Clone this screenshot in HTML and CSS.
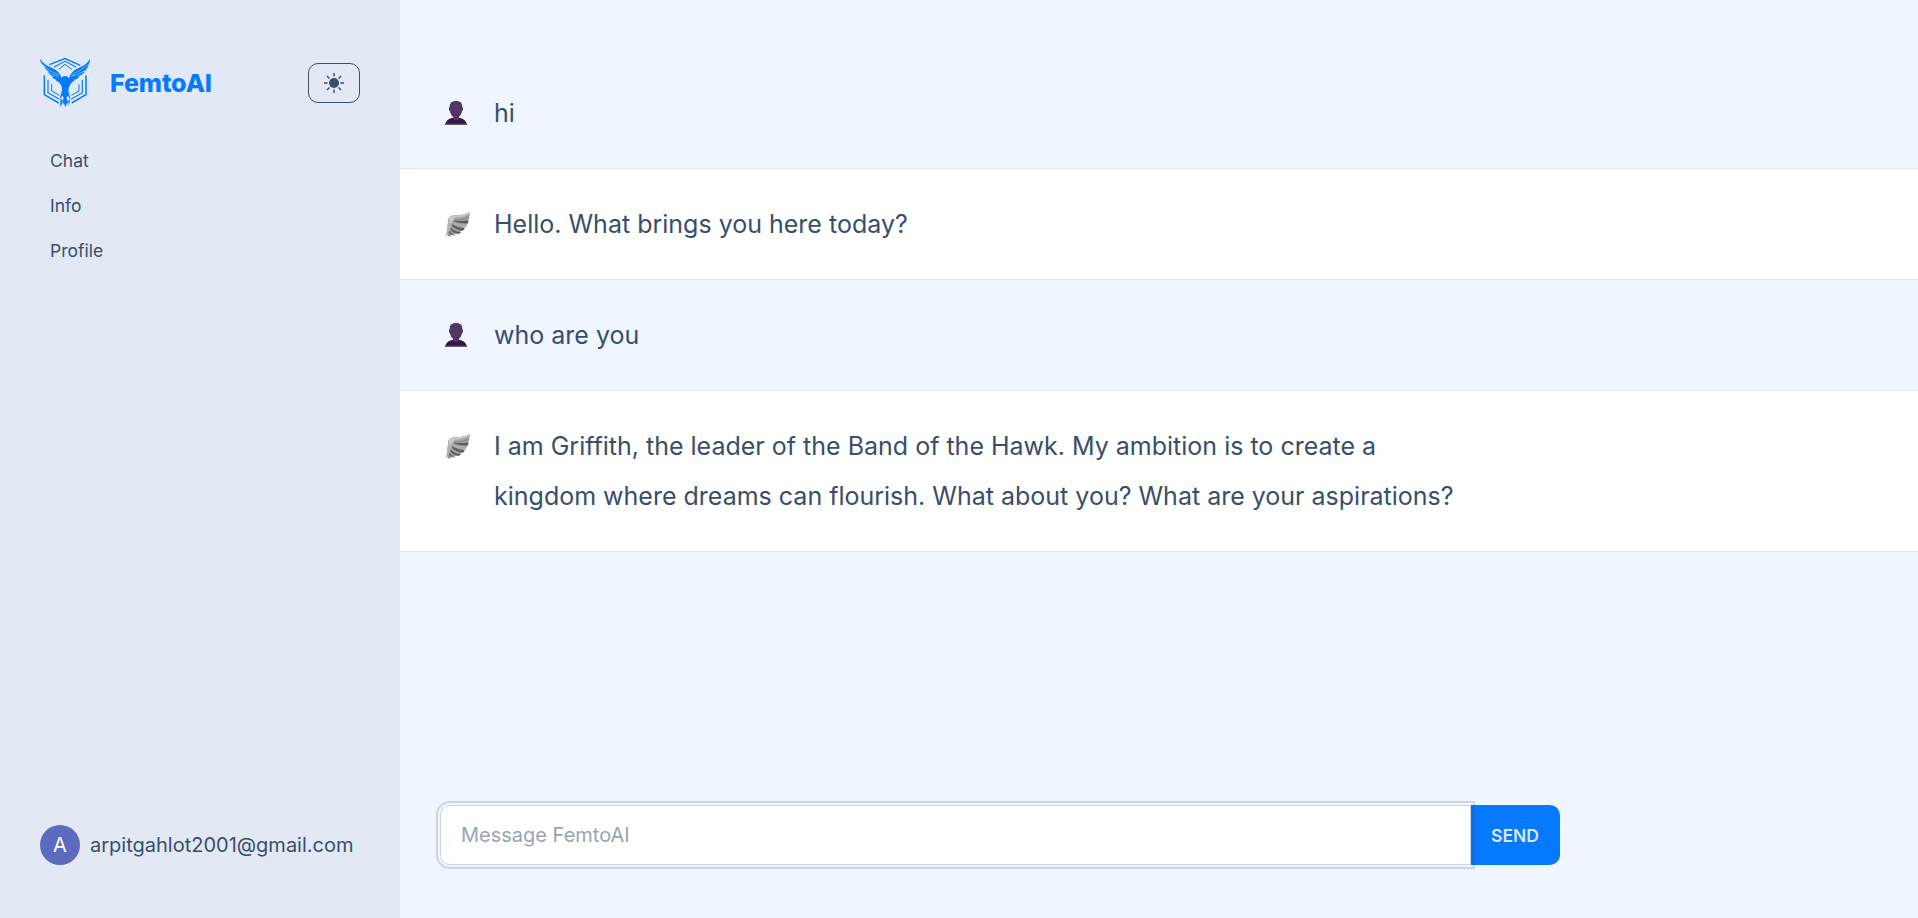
FILE: index.html
```html
<!DOCTYPE html>
<html lang="en">
<head>
<meta charset="utf-8">
<title>FemtoAI</title>
<link rel="stylesheet" href="styles.css">
</head>
<body>
<svg class="defs" aria-hidden="true">
  <symbol id="user" viewBox="0 0 66 72">
    <path d="M0 72c2-11 8-18 20-21h26c12 3 18 10 20 21z" fill="#321b41"/>
    <path d="M0 72l2-4h62l2 4z" fill="#6b5577"/>
    <path d="M24 40h18v12c-2 4-6 6-9 6s-7-2-9-6z" fill="#533566"/>
    <path d="M33 0c14 0 19 7 19 18 3 1 3 11-1 13-2 9-7 20-18 20S17 40 15 31c-4-2-4-12-1-13C14 7 19 0 33 0z" fill="#533566"/>
  </symbol>
  <symbol id="wing" viewBox="0 0 72 76">
    <path d="M0 75L7 20Q12 9 30 10 56 9 72 0v8l-3 3 1 8-4 5 2 8-5 5-1 7-6 3-3 8-7 2-4 5-8 1-6 5-8-1-9 3-5-3z" fill="#a5a5a5"/>
    <path d="M0 75L7 20q5-10 22-10L18 36z" fill="#b4b4b4"/>
    <path d="M26 23Q55 22 71 11l-2 9q-20 8-44 6z" fill="#8f8f8f"/>
    <path d="M25 26q22 4 43-2l-2 10q-18 3-43-5z" fill="#5e5e5e"/>
    <path d="M22 33q20 8 40 6l-3 7q-20 0-39-10z" fill="#b0b0b0"/>
    <path d="M19 37q16 11 38 12l-6 8Q28 55 17 42z" fill="#5e5e5e"/>
    <path d="M14 47q12 13 32 14l-8 6Q21 65 12 53z" fill="#616161"/>
    <path d="M10 57q9 12 21 14H19Q11 68 8 62z" fill="#686868"/>
    <path d="M7 65l9 9H6z" fill="#777"/>
    <path d="M8 18q9-7 27-7Q54 10 71 1v4Q48 17 26 17L12 36z" fill="#c9c9c9"/>
  </symbol>
</svg>
<div class="layout">
  <aside class="sidebar">
    <header class="brand">
      <svg class="logo" viewBox="30 21 150 150" fill="#057aff">
        <g fill="none" stroke="#057aff" stroke-width="4.5">
          <path d="M58 44l47-18 46 20M43 76v58l43 25M168 76v58l-43 25"/>
          <path d="M72 51l33-17 33 17M54 89v39l33 19M157 89v39l-33 19" stroke-width="3.5"/>
          <path d="M86 58l19-15 20 15M65 103v20l23 13M147 103v20l-23 13" stroke-width="3"/>
        </g>
        <path d="M30 26q10 18 37 28 21 8 28 31 1-7 10-7 9 0 12 7 7-23 28-31 26-10 35-28 0 15-8 23l3-1q-5 13-16 18l5 1q-8 9-20 12l5 1q-8 8-18 10l3 2q-10 3-15 15-4 7-4 17l7 25-9-12-4 7-4 7-3-7-5-7-9 12 8-27q1-12-6-22-6-8-13-8l3-2q-9-3-14-9l5-1q-12-4-18-13l5-1q-12-6-15-17l4 1Q30 41 30 26z"/>
        <path d="M91 145l9 10-9 16zM97 149l8-13 9 17 7-7-4 20-6-8-5 13-5-12-4 5z"/>
        <g fill="none" stroke="#e2e8f4" stroke-width="1.5"><path d="M38 45q25 22 48 29M47 63q20 13 40 16M172 45q-26 22-47 29M163 63q-20 13-39 16M99 142l-2 22M112 142l4 20"/></g>
      </svg>
      <span class="brand-name">FemtoAI</span>
      <button class="theme-toggle" aria-label="Toggle theme">
        <svg viewBox="0 0 20 20"><circle cx="10" cy="10" r="5" fill="currentColor"/><path d="M10 0v3.5M10 16.5V20M0 10h3.5M16.5 10H20M3 3l2.4 2.4M14.6 14.6L17 17M3 17l2.4-2.4M14.6 5.4L17 3" fill="none" stroke="currentColor" stroke-width="1.4"/></svg>
      </button>
    </header>
    <nav class="menu"><a>Chat</a><a>Info</a><a>Profile</a></nav>
    <footer class="account"><span class="avatar">A</span><span>arpitgahlot2001@gmail.com</span></footer>
  </aside>
  <main class="main">
    <section class="messages">
      <article class="message"><svg class="user-icon"><use href="#user"/></svg><p>hi</p></article>
      <article class="message reply"><svg class="wing-icon"><use href="#wing"/></svg><p>Hello. What brings you here today?</p></article>
      <article class="message"><svg class="user-icon"><use href="#user"/></svg><p>who are you</p></article>
      <article class="message reply"><svg class="wing-icon"><use href="#wing"/></svg><p>I am Griffith, the leader of the Band of the Hawk. My ambition is to create a kingdom where dreams can flourish. What about you? What are your aspirations?</p></article>
    </section>
    <form class="composer"><input type="text" placeholder="Message FemtoAI"><button type="button">SEND</button></form>
  </main>
</div>
</body>
</html>
```
FILE: styles.css
```css
* { box-sizing: border-box; }
html { font-size: 20px; }
body { margin: 0; font: 20px/30px Inter, sans-serif; color: #394e6a; background: #eff6ff; overflow: hidden; }
.defs { position: absolute; width: 0; height: 0; }
.layout { display: grid; grid-template-columns: 400px 1fr; height: 918px; }
.sidebar { display: flex; flex-direction: column; padding: 57px 40px 53px; background: #e2e8f4; }
.brand { display: flex; align-items: center; height: 50px; margin-bottom: 31px; }
.logo { width: 50px; height: 50px; }
.brand-name { margin: 2px auto 0 20px; font-size: 25px; line-height: 35px; font-weight: 800; letter-spacing: -0.1px; color: #057aff; }
.theme-toggle { display: flex; align-items: center; justify-content: center; width: 52px; height: 40px; margin-top: 1px; padding: 0; border: 1px solid #394e6a; border-radius: 10px; background: none; color: #394e6a; }
.theme-toggle svg { width: 20px; height: 20px; }
.menu { display: flex; flex-direction: column; }
.menu a { padding: 10px; height: 45px; font-size: 17.5px; line-height: 25px; }
.account { display: flex; align-items: center; gap: 10px; margin-top: auto; }
.avatar { display: grid; place-items: center; width: 40px; height: 40px; border-radius: 50%; background: #5c6bc0; color: #fff; }
.main { display: flex; flex-direction: column; padding: 58px 0 53px; min-width: 0; }
.message { display: flex; padding: 30px 40px; border-bottom: 1px solid #e2e8f4; font-size: 25px; line-height: 50px; }
.message p { margin: 0; max-width: 980px; }
.reply { background: #fff; }
.user-icon { flex: none; width: 22px; height: 24px; margin: 13px 27px 0 5px; }
.wing-icon { flex: none; width: 24px; height: 25px; margin: 13px 24px 0 6px; }
.composer { display: flex; width: 1120px; margin: auto 0 0 40px; }
.composer input { flex: 1; height: 60px; padding: 0 20px; border: 1px solid #cbd5e1; border-radius: 10px 0 0 10px; outline: 2px solid #cbd5e4; outline-offset: 2px; background: #fff; font: 20px Inter, sans-serif; color: #394e6a; }
.composer input::placeholder { color: #9ca3af; opacity: 1; }
.composer button { width: 89px; height: 60px; padding: 0 1px 0 0; border: 0; border-radius: 0 10px 10px 0; background: #057aff; color: #dbe6ff; font: 600 17.5px Inter, sans-serif; box-shadow: inset 4px 0 #0970e6; }
```
